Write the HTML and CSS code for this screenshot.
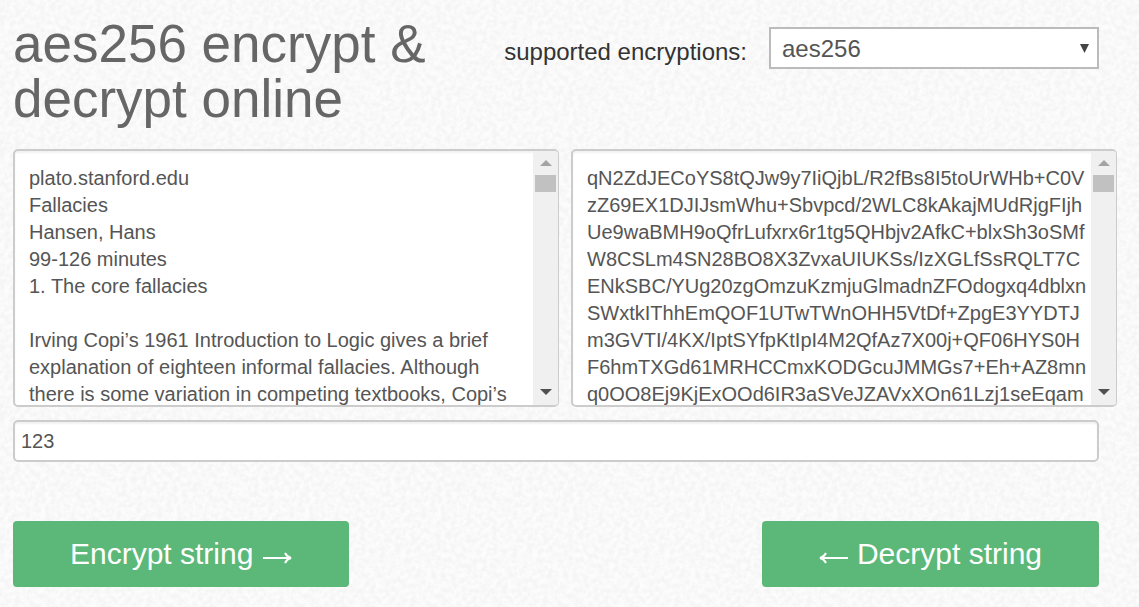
FILE: index.html
```html
<!DOCTYPE html>
<html lang="en">
<head>
<meta charset="utf-8">
<title>aes256 encrypt &amp; decrypt online</title>
<link rel="stylesheet" href="styles.css">
</head>
<body>
<main class="page">
  <header class="header">
    <h1 class="title">aes256 encrypt &amp; decrypt online</h1>
    <div class="cipher">
      <label class="cipher-label" for="cipher">supported encryptions:</label>
      <select class="cipher-select" id="cipher">
        <option selected>aes256</option>
      </select>
    </div>
  </header>
  <form class="form">
    <div class="texts">
      <div class="box">
        <textarea class="box-text" aria-label="Plain text" spellcheck="false">plato.stanford.edu
Fallacies
Hansen, Hans
99-126 minutes
1. The core fallacies

Irving Copi’s 1961 Introduction to Logic gives a brief
explanation of eighteen informal fallacies. Although
there is some variation in competing textbooks, Copi’s</textarea>
        <div class="scroll" aria-hidden="true">
          <svg class="scroll-arrow" viewBox="0 0 12 6"><path d="M0 6L6 0L12 6Z" fill="#a3a3a3"/></svg>
          <div class="scroll-thumb"></div>
          <svg class="scroll-arrow scroll-down" viewBox="0 0 12 6"><path d="M0 0L6 6L12 0Z" fill="#505050"/></svg>
        </div>
      </div>
      <div class="box">
        <textarea class="box-text" aria-label="Encrypted text" spellcheck="false">qN2ZdJECoYS8tQJw9y7IiQjbL/R2fBs8I5toUrWHb+C0V
zZ69EX1DJIJsmWhu+Sbvpcd/2WLC8kAkajMUdRjgFIjh
Ue9waBMH9oQfrLufxrx6r1tg5QHbjv2AfkC+blxSh3oSMf
W8CSLm4SN28BO8X3ZvxaUIUKSs/IzXGLfSsRQLT7C
ENkSBC/YUg20zgOmzuKzmjuGlmadnZFOdogxq4dblxn
SWxtkIThhEmQOF1UTwTWnOHH5VtDf+ZpgE3YYDTJ
m3GVTI/4KX/IptSYfpKtIpI4M2QfAz7X00j+QF06HYS0H
F6hmTXGd61MRHCCmxKODGcuJMMGs7+Eh+AZ8mn
q0OO8Ej9KjExOOd6IR3aSVeJZAVxXOn61Lzj1seEqam</textarea>
        <div class="scroll" aria-hidden="true">
          <svg class="scroll-arrow" viewBox="0 0 12 6"><path d="M0 6L6 0L12 6Z" fill="#a3a3a3"/></svg>
          <div class="scroll-thumb"></div>
          <svg class="scroll-arrow scroll-down" viewBox="0 0 12 6"><path d="M0 0L6 6L12 0Z" fill="#505050"/></svg>
        </div>
      </div>
    </div>
    <input class="key" type="text" aria-label="Key" value="123">
    <div class="actions">
      <button class="button" type="button">Encrypt string <svg class="arrow" viewBox="0 0 30 12" aria-hidden="true"><path d="M1 6H28M23 1Q25 5 29 6Q25 7 23 11"/></svg></button>
      <button class="button" type="button"><svg class="arrow" viewBox="0 0 30 12" aria-hidden="true"><path d="M29 6H2M7 1Q5 5 1 6Q5 7 7 11"/></svg> Decrypt string</button>
    </div>
  </form>
</main>
</body>
</html>
```
FILE: styles.css
```css
*, *::before, *::after { box-sizing: border-box; }

body {
  margin: 0;
  min-height: 100vh;
  font-family: "Liberation Sans", Arial, sans-serif;
  color: #333;
  background: #f8f8f8 url("data:image/svg+xml,%3Csvg xmlns='http://www.w3.org/2000/svg' width='132' height='132'%3E%3Cfilter id='n' x='0' y='0' width='100%25' height='100%25' color-interpolation-filters='sRGB'%3E%3CfeTurbulence type='fractalNoise' baseFrequency='.2' numOctaves='3' stitchTiles='stitch'/%3E%3CfeColorMatrix values='0 0 0 0 .93 0 0 0 0 .93 0 0 0 0 .93 3 0 0 0 -1'/%3E%3C/filter%3E%3Crect width='132' height='132' fill='%23fcfcfc'/%3E%3Crect width='132' height='132' filter='url(%23n)' opacity='.45'/%3E%3C/svg%3E");
}

.page { padding: 16px 40px 20px 13px; }

.header {
  display: flex;
  justify-content: space-between;
  align-items: flex-start;
  margin-bottom: 23px;
}

.title {
  flex: 0 1 440px;
  margin: 0;
  font-size: 53px;
  line-height: 55px;
  font-weight: 400;
  color: #666;
}

.cipher {
  display: flex;
  align-items: center;
  gap: 22px;
  padding-top: 11px;
}

.cipher-label {
  padding-top: 8px;
  font-size: 24px;
  white-space: nowrap;
}

.cipher-select {
  appearance: none;
  width: 330px;
  height: 42px;
  padding: 0 11px;
  border: 2px solid #bbb;
  border-radius: 0;
  font: 24px "Liberation Sans", Arial, sans-serif;
  color: #555;
  background: #fff url("data:image/svg+xml,%3Csvg xmlns='http://www.w3.org/2000/svg' viewBox='0 0 9 9'%3E%3Cpath d='M0 0H9L4.5 9Z' fill='%23444'/%3E%3C/svg%3E") no-repeat right 8px center / 9px 9px;
}

.texts {
  display: grid;
  grid-template-columns: 1fr 1fr;
  gap: 12px;
  margin-right: -18px;
}

.box {
  display: flex;
  height: 258px;
  border: 2px solid #ccc;
  border-right-width: 1px;
  border-radius: 5px;
  overflow: hidden;
  background: #fff;
  box-shadow: inset 0 2px 2px #f2f2f2;
}

.box-text {
  flex: 1;
  min-width: 0;
  padding: 14px 0 0 14px;
  border: 0;
  resize: none;
  overflow: hidden;
  white-space: pre;
  font: 20px/27px "Liberation Sans", Arial, sans-serif;
  color: #555;
  background: transparent;
}

.scroll {
  display: flex;
  flex-direction: column;
  align-items: center;
  width: 25px;
  padding: 9px 0 10px;
  background: #f0f0f0;
}

.scroll-arrow { width: 12px; height: 6px; }

.scroll-thumb {
  width: 21px;
  height: 17px;
  margin-top: 9px;
  background: #c1c1c1;
}

.scroll-down { margin-top: auto; }

.key {
  display: block;
  width: 100%;
  height: 42px;
  margin-top: 13px;
  padding: 0 6px;
  border: 2px solid #ccc;
  border-radius: 5px;
  font: 20px "Liberation Sans", Arial, sans-serif;
  color: #555;
  background: #fff;
  box-shadow: inset 0 2px 2px #f2f2f2;
}

.actions {
  display: flex;
  justify-content: space-between;
  margin-top: 59px;
}

.button {
  height: 66px;
  padding: 0 57px 1px;
  border: 0;
  border-radius: 4px;
  font: 30px "Liberation Sans", Arial, sans-serif;
  color: #fff;
  background: #5cb878;
}

.arrow {
  width: 30px;
  height: 12px;
  fill: none;
  stroke: #fff;
  stroke-width: 2;
}
```
